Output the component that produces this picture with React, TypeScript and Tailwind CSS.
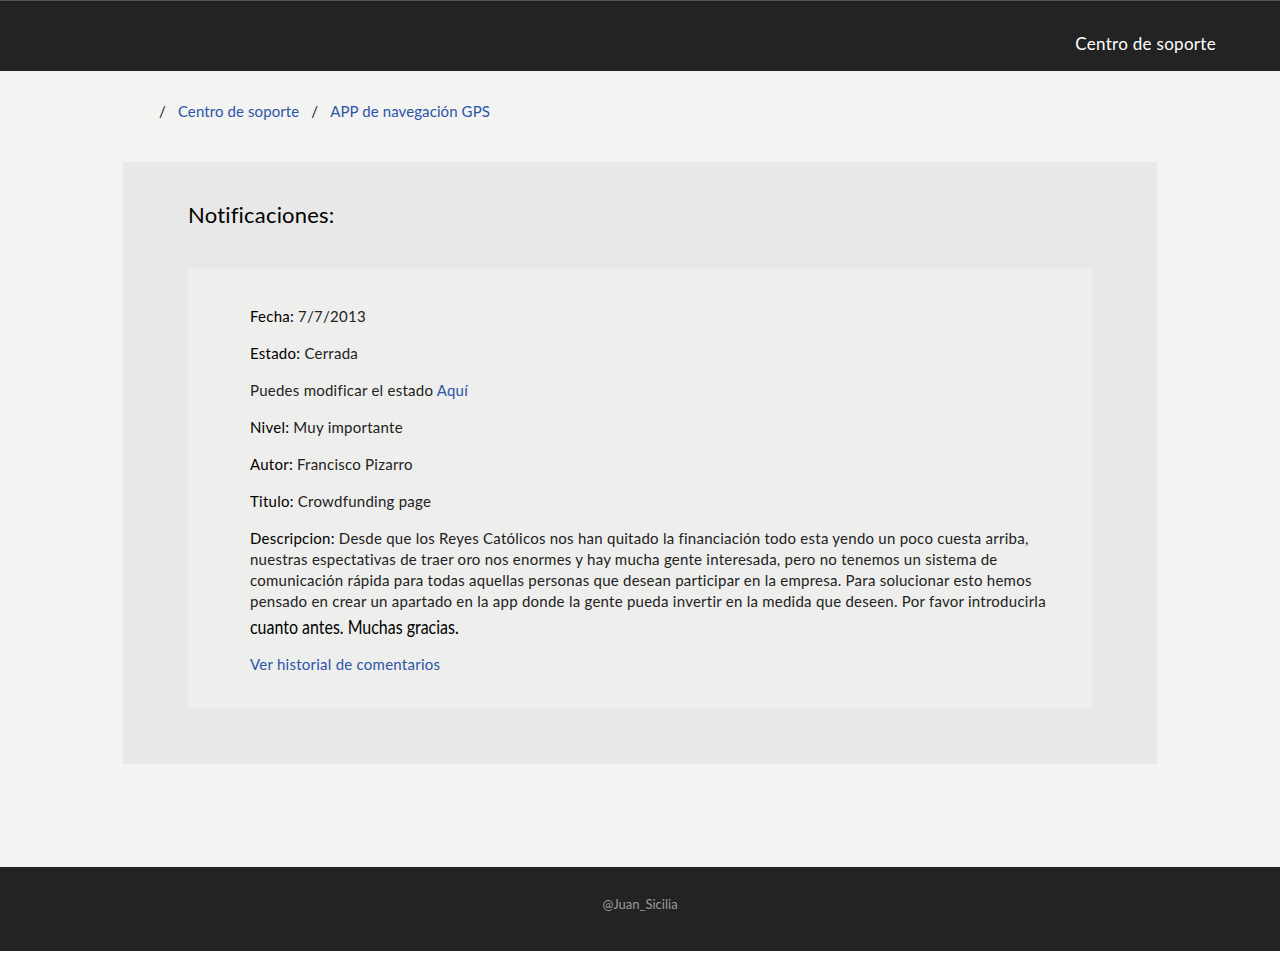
import React from "react";

const font = { fontFamily: "Lato, 'Noto Sans', sans-serif" };

function Field({ label, children }: { label: string; children: React.ReactNode }) {
  return (
    <p className="mb-4 text-[15px] leading-[21px] text-[#222] tracking-[0.25px]">
      <span className="text-black">{label}:</span> {children}
    </p>
  );
}

export default function App() {
  return (
    <div className="min-h-[959px] bg-white flex flex-col" style={font}>
      <header className="h-[71px] bg-[#232323] border-t border-[#555] flex items-start justify-end pr-[64px] pt-[31px]">
        <span className="text-white text-[17px] leading-[24px] tracking-[0.3px]">Centro de soporte</span>
      </header>
      <main className="bg-[#f3f3f1] flex-1 pb-[103px]">
        <nav className="pt-[29px] pl-[159px] flex items-center gap-[12px] text-[15px] leading-[22px] tracking-[0.1px]">
          <span className="text-[#222]">/</span>
          <a className="text-[#2c55a8]">Centro de soporte</a>
          <span className="text-[#222]">/</span>
          <a className="text-[#2c55a8]">APP de navegación GPS</a>
        </nav>
        <section className="mx-auto mt-[40px] w-[1034px] bg-[#e8e8e8] px-[65px] pt-[38px] pb-[55px]">
          <h1 className="text-[22px] leading-[30px] text-black tracking-[0.2px]">Notificaciones:</h1>
          <div className="mt-[39px] bg-[#eeeeec] pl-[62px] pr-[20px] pt-[37px] pb-[18px]">
            <Field label="Fecha">7/7/2013</Field>
            <Field label="Estado">Cerrada</Field>
            <p className="mb-4 text-[15px] leading-[21px] text-[#222] tracking-[0.25px]">
              Puedes modificar el estado <a className="text-[#2c55a8]">Aquí</a>
            </p>
            <Field label="Nivel">Muy importante</Field>
            <Field label="Autor">Francisco Pizarro</Field>
            <Field label="Titulo">Crowdfunding page</Field>
            <p className="mb-[13px] text-[15px] leading-[21px] text-[#222] tracking-[0.25px]">
              <span className="text-black">Descripcion:</span> Desde que los Reyes Católicos nos han quitado la financiación todo esta yendo un poco cuesta arriba,
              <br />
              nuestras espectativas de traer oro nos enormes y hay mucha gente interesada, pero no tenemos un sistema de
              <br />
              comunicación rápida para todas aquellas personas que desean participar en la empresa. Para solucionar esto hemos
              <br />
              pensado en crear un apartado en la app donde la gente pueda invertir en la medida que deseen. Por favor introducirla
              <br />
              <span className="inline-block origin-left scale-x-[0.84] text-[19px] leading-[29px] text-black tracking-normal">cuanto antes. Muchas gracias.</span>
            </p>
            <p className="mb-4 text-[15px] leading-[21px] tracking-[0.25px]">
              <a className="text-[#2c55a8]">Ver historial de comentarios</a>
            </p>
          </div>
        </section>
      </main>
      <footer className="h-[84px] bg-[#232323] flex items-center justify-center pb-[8px]">
        <span className="text-[#9a9a9a] text-[13px]">@Juan_Sicilia</span>
      </footer>
      <div className="h-[8px] bg-white" />
    </div>
  );
}
